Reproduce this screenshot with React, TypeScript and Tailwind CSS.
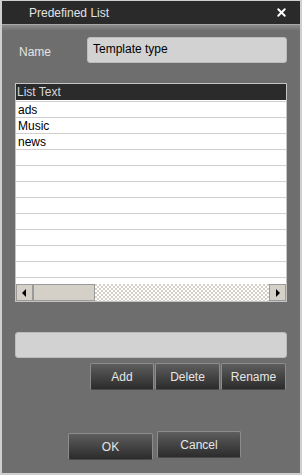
import { X } from "lucide-react";

const rows = ["ads", "Music", "news", "", "", "", "", "", "", "", ""];

function DarkButton({ label, className }: { label: string; className?: string }) {
  return (
    <button
      className={
        "flex items-center justify-center rounded-[2px] border border-[#8c8c8c] border-b-[#4a4a4a] bg-gradient-to-b from-[#5e5e5e] to-[#2c2c2c] text-[12px] text-[#e6e6e6] " +
        (className ?? "")
      }
    >
      {label}
    </button>
  );
}

export default function App() {
  return (
    <div className="w-[302px] h-[475px] font-['Liberation_Sans',Arial,sans-serif] bg-[#6e6e6e] border-l-2 border-r-2 border-b-2 border-t border-[#cfcfcf] flex flex-col overflow-hidden">
      {/* title bar */}
      <div className="h-[23px] bg-[#2a2a2a] flex items-center justify-between pl-[27px] pr-[12px] shrink-0">
        <span className="text-[12px] text-[#e2e2e2]">Predefined List</span>
        <X size={13} strokeWidth={3.5} className="text-white" />
      </div>
      <div className="h-px bg-[#a8a8a8] shrink-0" />
      <div className="h-[6px] bg-gradient-to-b from-[#8c8c8c] to-[#6e6e6e] shrink-0" />

      <div className="flex flex-col px-[13px] pt-[6px]">
        {/* name row */}
        <div className="flex items-center h-[26px]">
          <span className="w-[72px] pl-[4px] pt-[4px] text-[12px] text-[#e4e4e4]">Name</span>
          <div className="flex-1 h-[26px] rounded-[3px] bg-[#d2d2d2] border border-[#bcbcbc] px-[5px] pt-[2px] text-[12px] text-black">
            Template type
          </div>
        </div>

        {/* list */}
        <div className="mt-[20px] border border-[#c4c4c4] bg-white flex flex-col">
          <div className="h-[16px] bg-[#2b2b2b] text-[12px] text-[#d8d8d8] leading-[16px] pl-[1px]">
            List Text
          </div>
          <div className="h-px" />
          <div className="h-px bg-[#cfcfcf]" />
          {rows.map((r, i) => (
            <div
              key={i}
              className="h-[16px] border-b border-[#cfcfcf] text-[12px] text-black leading-[16px] pl-[2px]"
            >
              {r}
            </div>
          ))}
          <div className="h-[6px]" />
          {/* horizontal scrollbar */}
          <div className="h-[17px] flex bg-[#d4d0c8]">
            <div className="w-[17px] flex items-center justify-center border border-[#9a9a9a] bg-[#d4d0c8]">
              <svg width="5" height="8" viewBox="0 0 5 8">
                <path d="M4 0 L0 4 L4 8 Z" fill="#000" />
              </svg>
            </div>
            <div className="w-[62px] border border-[#9a9a9a] bg-[#d4d0c8]" />
            <div className="flex-1 bg-[repeating-conic-gradient(#ffffff_0_25%,#d4d0c8_0_50%)] bg-[length:4px_4px]" />
            <div className="w-[17px] flex items-center justify-center border border-[#9a9a9a] bg-[#d4d0c8]">
              <svg width="5" height="8" viewBox="0 0 5 8">
                <path d="M1 0 L5 4 L1 8 Z" fill="#000" />
              </svg>
            </div>
          </div>
        </div>

        {/* text input */}
        <div className="mt-[30px] h-[26px] rounded-[3px] bg-[#d2d2d2] border border-[#bcbcbc]" />

        {/* add/delete/rename */}
        <div className="mt-[5px] flex justify-end gap-[1px] pr-[1px]">
          <DarkButton label="Add" className="w-[64px] h-[27px]" />
          <DarkButton label="Delete" className="w-[65px] h-[27px]" />
          <DarkButton label="Rename" className="w-[65px] h-[27px]" />
        </div>

        {/* ok/cancel */}
        <div className="mt-[41px] flex gap-[4px] pl-[53px] items-start">
          <DarkButton label="OK" className="w-[85px] h-[27px] mt-[2px]" />
          <DarkButton label="Cancel" className="w-[84px] h-[27px]" />
        </div>
      </div>
    </div>
  );
}
